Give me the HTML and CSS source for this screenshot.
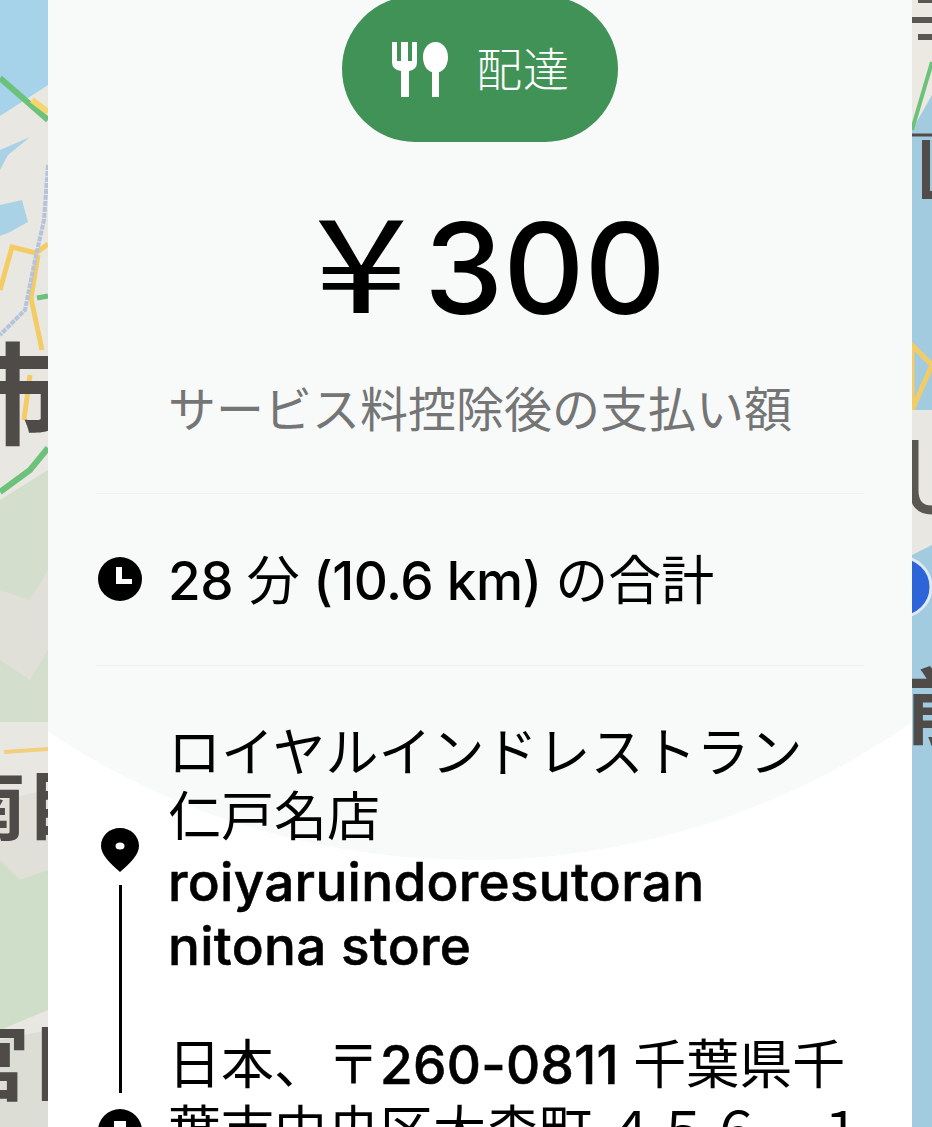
FILE: index.html
```html
<!DOCTYPE html>
<html lang="ja">
<head>
<meta charset="utf-8">
<title>配達</title>
<link rel="stylesheet" href="styles.css">
</head>
<body>
<svg class="map" width="932" height="1127" viewBox="0 0 932 1127" aria-hidden="true">
  <rect width="932" height="1127" fill="#e9e7e1"/>
  <path d="M0 0H48V85L28 98L0 116Z" fill="#a6d3ea"/>
  <path d="M0 205L22 200L28 222L10 232L0 236Z M0 150L30 137L8 155L0 170Z" fill="#a9d2e6"/>
  <path d="M0 500L48 470V722H0Z" fill="#d3dfcc"/>
  <path d="M0 590L30 600L48 570V650L30 680L0 660Z" fill="#e0dfd8"/>
  <path d="M0 850L48 860V1010L0 1030Z" fill="#cfdec8"/>
  <path d="M0 800L48 790V870L20 880L0 860Z" fill="#e0dfd8"/>
  <path d="M0 1040L48 1030V1127H0Z" fill="#dcddd5"/>
  <path d="M0 78L48 120" stroke="#6cc27a" stroke-width="6" fill="none"/>
  <path d="M32 100L48 112" stroke="#f4d76c" stroke-width="6" fill="none"/>
  <path d="M0 290L12 247L36 253L48 244M38 255L31 298L42 350M30 375L24 420" stroke="#f3cc66" stroke-width="5" fill="none"/>
  <path d="M48 165L44 220L35 260L25 310L0 335" stroke="#b5c4dc" stroke-width="4" stroke-dasharray="5 1" fill="none"/>
  <path d="M0 492L30 470L48 448" stroke="#6cc27a" stroke-width="6" fill="none"/>
  <path d="M37 298L48 296" stroke="#6cc27a" stroke-width="5" fill="none"/>
  <path d="M4 752L48 749" stroke="#f2cf7c" stroke-width="4" fill="none"/>
  <rect x="912" width="20" height="1127" fill="#a3cbe0"/>
  <path d="M912 0H932V95L912 130Z" fill="#ece9e2"/>
  <path d="M912 130L932 62" stroke="#6cc27a" stroke-width="4" fill="none"/>
  <path d="M912 345L932 365L912 410Z" fill="none" stroke="#f3cc66" stroke-width="5"/>
  <path d="M912 410H932V545L912 555Z" fill="#e9e7e1"/>
  <path d="M918 0H932M912 20H932M918 37H932" stroke="#5a5652" stroke-width="6" fill="none"/>
  <path d="M926 140V195H932" stroke="#504c49" stroke-width="8" fill="none"/>
  <path d="M912 135H932" stroke="#504c49" stroke-width="3" fill="none"/>
  <path d="M914 440V490Q914 510 932 510" stroke="#5a5652" stroke-width="9" fill="none"/>
  <ellipse cx="900" cy="587" rx="31" ry="30" fill="#2d65d8" stroke="#dfeaf5" stroke-width="3"/>
  <text x="905" y="738" class="map-label">前</text>
  <text x="-42" y="436" class="map-label map-label-lg">市</text>
  <text x="-50" y="834" class="map-label map-label-sm">南目</text>
  <text x="-54" y="1094" class="map-label">宮目</text>
</svg>

<main class="card">
  <div class="card-shade"></div>
  <div class="card-body">
    <div class="pill-row">
      <div class="pill">
        <svg class="pill-icon" width="56" height="55" viewBox="0 0 56 55">
          <path d="M0 0H5V19H9V0H16V19H20V0H25V20Q25 28 17 29V55H9V29Q0 28 0 20Z" fill="#fff"/>
          <path d="M43.5 0C51 0 56 7 56 15C56 23 52 29 47 30V55H40V30C35 29 31 23 31 15C31 7 36 0 43.5 0Z" fill="#fff"/>
        </svg>
        <span class="pill-text">配達</span>
      </div>
    </div>
    <div class="price"><span class="yen">¥</span><span class="amount">300</span></div>
    <p class="note">サービス料控除後の支払い額</p>
    <hr class="rule">
    <div class="row">
      <svg class="round-icon" width="44" height="44" viewBox="0 0 44 44">
        <circle cx="22" cy="22" r="22" fill="#000"/>
        <path d="M18 10H24V22H34V27H18Z" fill="#fff"/>
      </svg>
      <span class="row-text">28 <span class="ja">分</span> (10.6 km) <span class="ja">の合計</span></span>
    </div>
    <hr class="rule rule-low">
    <div class="trip">
      <div class="rail">
        <svg class="pin" width="38" height="44" viewBox="0 0 38 44">
          <path d="M19 0C30 0 38 8 38 18C38 27 29 35 19 44C9 35 0 27 0 18C0 8 8 0 19 0Z" fill="#000"/>
          <ellipse cx="19" cy="18" rx="4.5" ry="3.5" fill="#fff"/>
        </svg>
        <span class="rail-line"></span>
        <svg class="round-icon" width="44" height="44" viewBox="0 0 44 44">
          <circle cx="22" cy="22" r="22" fill="#000"/>
          <rect x="16" y="12" width="12" height="20" fill="#fff"/>
        </svg>
      </div>
      <div class="stop">
        <p class="jp">ロイヤルインドレストラン<br>仁戸名店</p>
        <p class="latin">roiyaruindoresutoran<br>nitona store</p>
        <p class="addr"><span class="ja">日本、〒</span>260-0811 <span class="ja">千葉県千</span><br><span class="ja">葉市中央区大森町 ４５６－１</span></p>
      </div>
    </div>
  </div>
</main>
</body>
</html>
```
FILE: styles.css
```css
html, body {
  margin: 0;
  padding: 0;
  height: 1127px;
  overflow: hidden;
  background: #e9e7e1;
}

body {
  position: relative;
  font-family: "Inter", "Noto Sans CJK JP", sans-serif;
  color: #000;
}

.map {
  position: absolute;
  top: 0;
  left: 0;
  filter: blur(0.7px);
}

.map-label {
  font-family: "Noto Sans CJK JP", sans-serif;
  font-size: 84px;
  font-weight: 700;
  fill: #4f4b49;
}

.map-label-lg {
  font-size: 110px;
}

.map-label-sm {
  font-size: 76px;
}

.card {
  position: relative;
  width: 864px;
  height: 1127px;
  margin-left: 48px;
  background: #fff;
  overflow: hidden;
}

.card-shade {
  position: absolute;
  left: -335px;
  top: -640px;
  width: 1520px;
  height: 1500px;
  border-radius: 50%;
  background: #f8fafa;
}

.card-body {
  position: relative;
  padding: 0 48px;
}

.pill-row {
  display: flex;
  justify-content: center;
}

.pill {
  display: flex;
  align-items: center;
  gap: 28px;
  box-sizing: border-box;
  width: 276px;
  height: 146px;
  margin-top: -4px;
  padding-left: 50px;
  border-radius: 73px;
  background: #419257;
  color: #fff;
}

.pill-text {
  margin-bottom: 6px;
  font-family: "Noto Sans CJK JP", sans-serif;
  font-size: 46px;
  font-weight: 300;
  line-height: 1;
  letter-spacing: 1px;
}

.price {
  display: flex;
  justify-content: center;
  align-items: center;
  gap: 27px;
  height: 136px;
  margin-top: 58px;
  padding-left: 31px;
  line-height: 136px;
}

.yen {
  display: inline-block;
  margin-bottom: 24px;
  font-family: "Noto Sans CJK JP", sans-serif;
  font-size: 130px;
  font-weight: 400;
  transform: scaleX(1.3);
}

.amount {
  font-size: 126px;
  font-weight: 500;
}

.note {
  margin: 38px 0 0;
  text-align: center;
  font-family: "Noto Sans CJK JP", sans-serif;
  font-size: 48px;
  font-weight: 400;
  line-height: 64px;
  color: #757575;
}

.rule {
  height: 1px;
  margin: 55px 0 0;
  border: 0;
  background: #eff1f1;
}

.rule-low {
  margin-top: 54px;
}

.row {
  display: flex;
  align-items: center;
  gap: 26px;
  height: 64px;
  margin-top: 53px;
  padding-left: 2px;
}

.row-text {
  font-size: 53px;
  font-weight: 500;
  line-height: 64px;
  white-space: nowrap;
  letter-spacing: -0.5px;
}

.ja {
  font-family: "Noto Sans CJK JP", sans-serif;
  font-weight: 400;
  letter-spacing: 0;
  -webkit-text-stroke: 0;
}

.trip {
  display: flex;
  gap: 26px;
  margin-top: 53px;
  padding-left: 2px;
}

.rail {
  display: flex;
  flex-direction: column;
  align-items: center;
  flex: none;
  width: 44px;
  padding-top: 109px;
}

.pin {
  flex: none;
}

.rail-line {
  flex: none;
  width: 3px;
  height: 208px;
  margin: 13px 0 16px;
  background: #000;
}

.stop {
  width: 700px;
}

.stop p {
  margin: 0;
  font-size: 53px;
  font-weight: 500;
  line-height: 64px;
  white-space: nowrap;
  letter-spacing: 0.3px;
  -webkit-text-stroke: 0.6px #000;
}

.stop .jp {
  margin: -2px 0 5px;
  font-family: "Noto Sans CJK JP", sans-serif;
  font-weight: 400;
  letter-spacing: 0;
  -webkit-text-stroke: 0;
}

.stop .addr {
  margin-top: 52px;
  line-height: 62px;
}
```
